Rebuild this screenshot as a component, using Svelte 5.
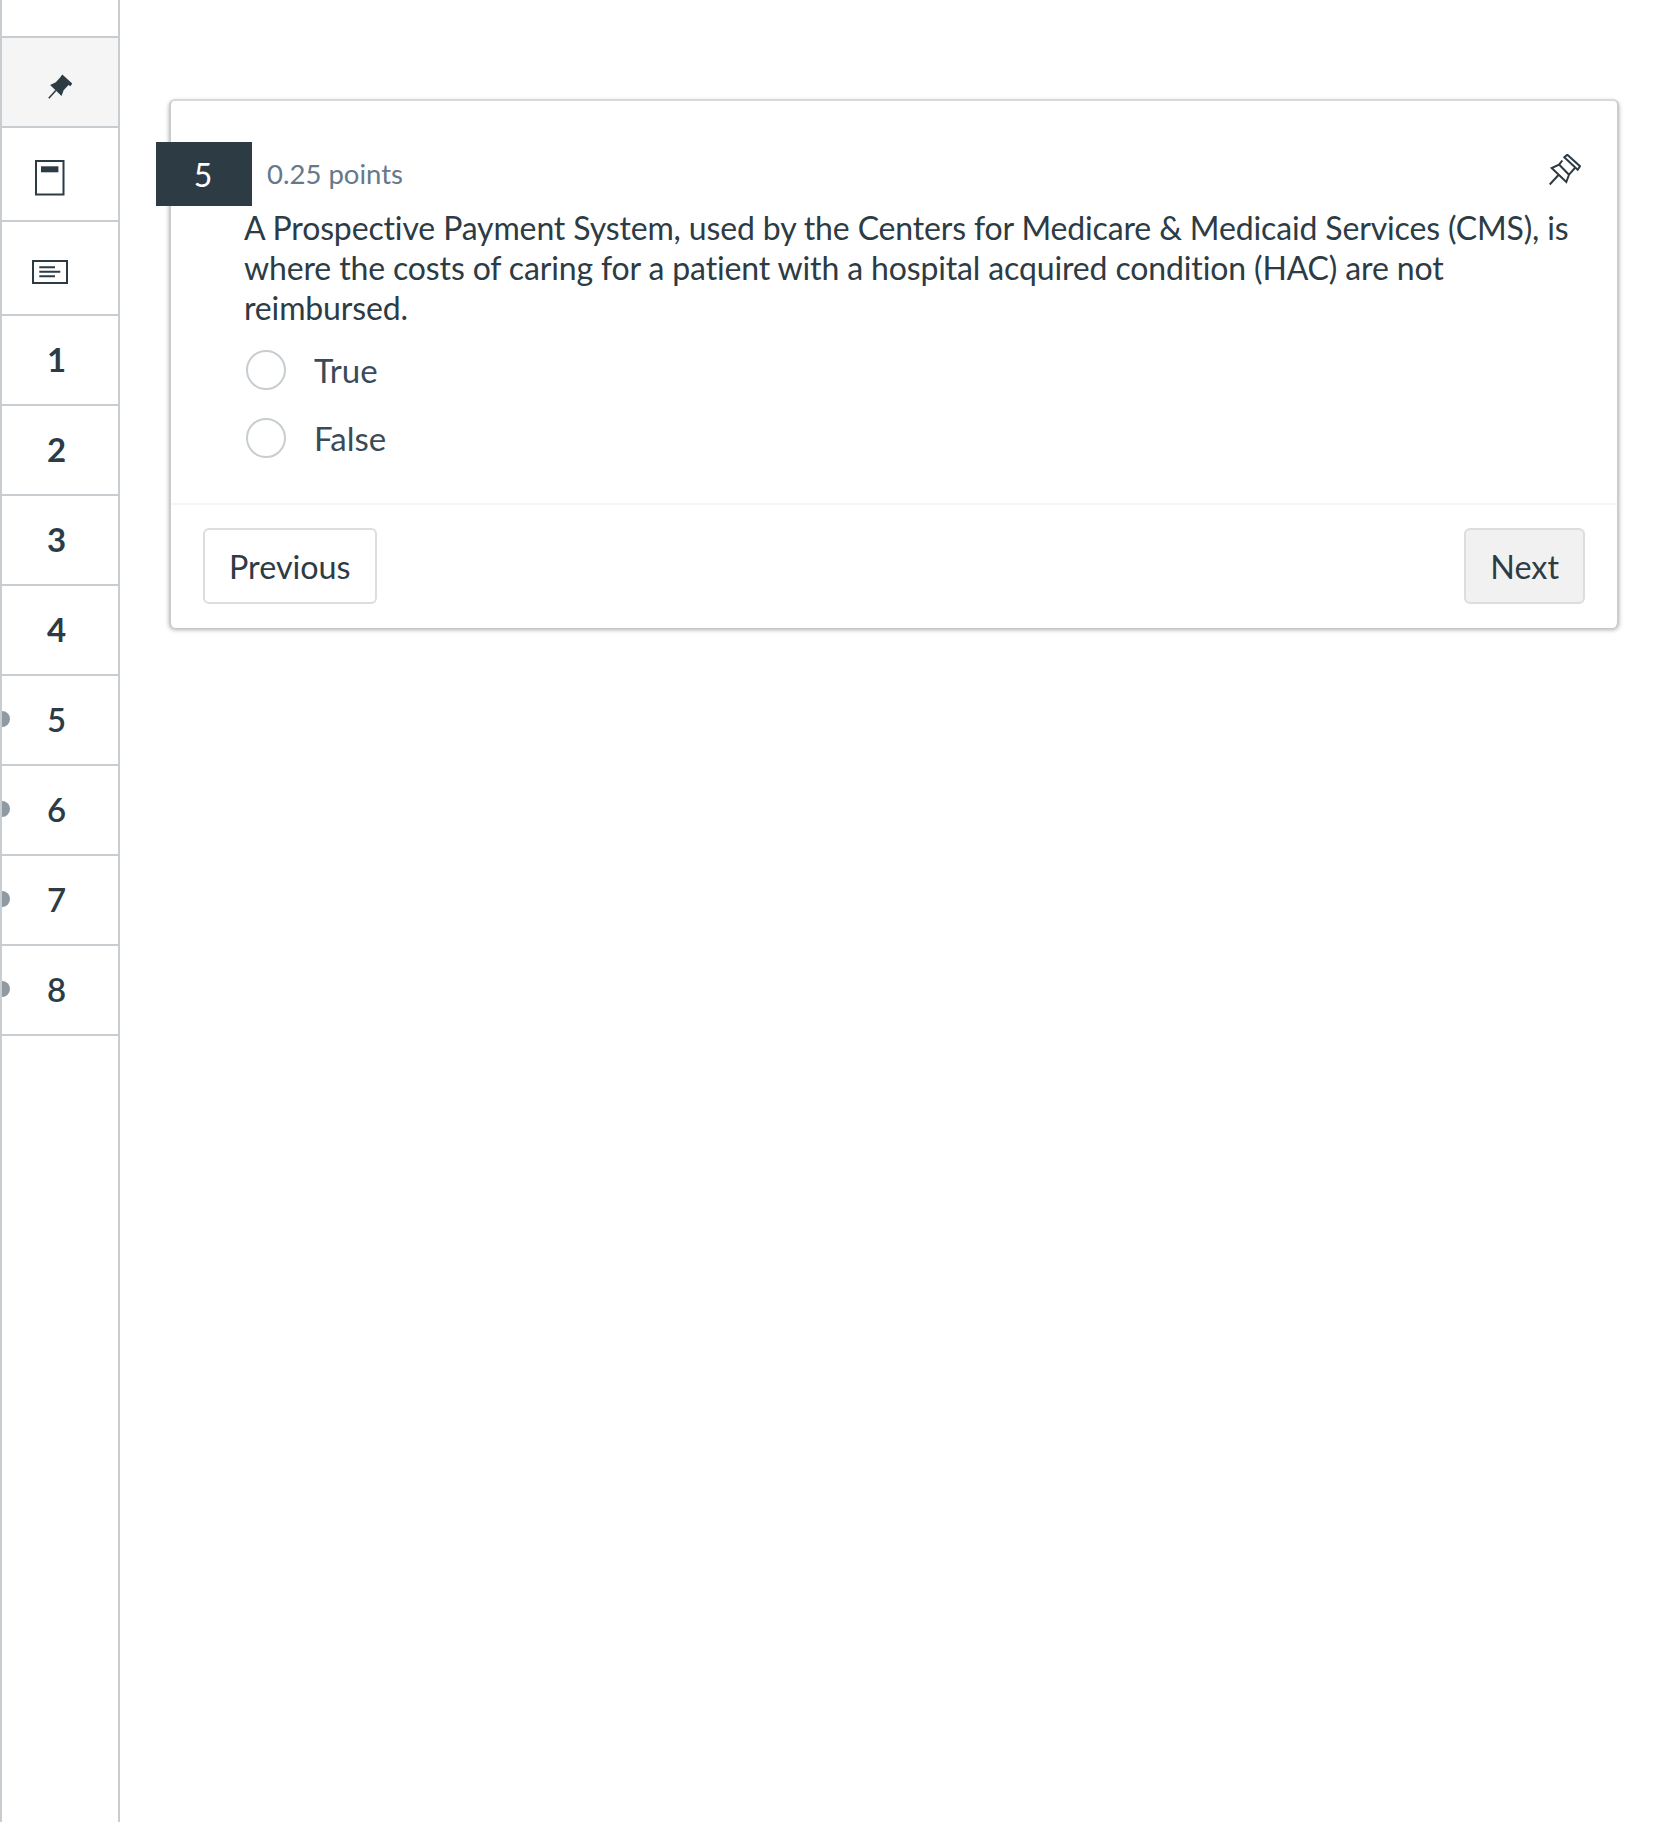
<script lang="ts">
	const numbers = [
		{ n: 1, flagged: false, done: true },
		{ n: 2, flagged: false, done: true },
		{ n: 3, flagged: false, done: true },
		{ n: 4, flagged: false, done: true },
		{ n: 5, flagged: true, done: false },
		{ n: 6, flagged: true, done: false },
		{ n: 7, flagged: true, done: false },
		{ n: 8, flagged: true, done: false }
	];
	const options = ['True', 'False'];
</script>

<div class="page">
	<nav class="rail">
		<div class="cell top"></div>
		<div class="cell pin">
			<svg width="25" height="25" viewBox="0 0 32 32" aria-hidden="true">
				<path class="solid" d="M18.3 .7 31 12.3 28.7 15.7 26.3 14 20 20.7 17.3 28 2.7 14 10 10.7 15.5 4.5z" />
				<path class="needle" d="M1 31 10 21" />
			</svg>
		</div>
		<div class="cell tool book">
			<svg width="30" height="36" viewBox="0 0 30 36" aria-hidden="true">
				<rect class="frame" x="1" y="1" width="27.5" height="33.5" />
				<rect class="solid" x="6" y="6.3" width="17.4" height="6" />
			</svg>
		</div>
		<div class="cell tool note">
			<svg width="36" height="24" viewBox="0 0 36 24" aria-hidden="true">
				<rect class="frame" x="1" y="1" width="34" height="22" />
				<path class="lines" d="M7.300 7.300H23M7.300 11.700H28.300M7.300 16.300H23" />
			</svg>
		</div>
		{#each numbers as q (q.n)}
			<div class="cell num" class:done={q.done}>
				{#if q.flagged}<span class="dot"></span>{/if}
				{q.n}
			</div>
		{/each}
	</nav>

	<main class="main">
		<section class="card">
			<div class="badge">5</div>
			<div class="head">
				<span class="points">0.25 points</span>
				<svg class="flag" width="32" height="32" viewBox="0 0 32 32" aria-hidden="true">
					<path d="M18.300 .7 31 12.300 28.700 15.700 15.300 3.300zM13.300 6.500 10 10.700 2.700 14 17.300 28 20 20.700 26.300 13.500M10.300 10.700 20 20.700M.7 30.500 9.500 21" />
				</svg>
			</div>
			<div class="body">
				<p class="text">A Prospective Payment System, used by the Centers for Medicare &amp; Medicaid Services (CMS), is where the costs of caring for a patient with a hospital acquired condition (HAC) are not reimbursed.</p>
				<div class="options">
					{#each options as o}
						<label class="option"><span class="radio"></span>{o}</label>
					{/each}
				</div>
			</div>
			<div class="foot">
				<button class="btn">Previous</button>
				<button class="btn next">Next</button>
			</div>
		</section>
	</main>
</div>

<style>
	:global(body) {
		background: #fff;
	}
	.page {
		display: flex;
		min-height: 1822px;
		font-family: Lato, "Open Sans", sans-serif;
		font-variant-ligatures: none;
		color: #2d3b45;
	}
	.rail {
		flex: 0 0 120px;
		box-sizing: border-box;
		border-left: 2px solid #c7cdd1;
		border-right: 2px solid #c7cdd1;
	}
	.cell {
		position: relative;
		overflow: hidden;
		box-sizing: border-box;
		height: 90px;
		display: flex;
		align-items: center;
		border-bottom: 2px solid #c7cdd1;
	}
	.top {
		height: 38px;
	}
	.pin {
		justify-content: center;
		background: #f5f5f5;
		padding-top: 9px;
	}
	.tool {
		height: 94px;
	}
	.book {
		padding: 8px 0 0 33px;
	}
	.note {
		padding: 8px 0 0 30px;
	}
	.num {
		padding-left: 45px;
		font-size: 33px;
		padding-bottom: 2px;
		font-weight: 600;
	}
	.num.done {
		font-weight: 700;
	}
	.dot {
		position: absolute;
		left: -8px;
		top: 35px;
		width: 16px;
		height: 16px;
		border-radius: 50%;
		background: #8f9aa3;
	}
	.solid {
		fill: #2d3b45;
	}
	.needle,
	.lines {
		fill: none;
		stroke: #2d3b45;
		stroke-width: 2;
	}
	.frame {
		fill: #fff;
		stroke: #2d3b45;
		stroke-width: 2;
	}
	.main {
		flex: 1;
		min-width: 0;
		padding: 99px 0 0 49px;
	}
	.card {
		position: relative;
		box-sizing: border-box;
		width: 1450px;
		height: 529px;
		background: #fff;
		border-radius: 6px;
		border: 2px solid #c7cdd1;
		border-top-color: #d5d9dc;
		border-width: 2px 2px 0;
		box-shadow: 0 2px 4px rgba(0, 0, 0, 0.3);
		display: flex;
		flex-direction: column;
	}
	.badge {
		position: absolute;
		left: -15px;
		top: 41px;
		box-sizing: border-box;
		width: 96px;
		height: 64px;
		padding-right: 2px;
		background: #2d3b45;
		color: #fff;
		font-size: 32px;
		display: flex;
		align-items: center;
		justify-content: center;
	}
	.head {
		display: flex;
		align-items: flex-start;
		justify-content: space-between;
		height: 107px;
		box-sizing: border-box;
		padding: 51px 36px 0 96px;
	}
	.points {
		font-size: 27.500px;
		line-height: 44px;
		color: #66788a;
	}
	.flag {
		fill: none;
		stroke: #2d3b45;
		stroke-width: 2;
		margin-top: 2px;
	}
	.body {
		padding: 0 40px 0 73px;
		flex: 1;
	}
	.text {
		margin: 0;
		font-size: 32px;
		letter-spacing: -0.14px;
		line-height: 40px;
	}
	.options {
		margin-top: 22px;
		display: flex;
		flex-direction: column;
		gap: 28px;
	}
	.option {
		display: flex;
		align-items: center;
		height: 40px;
		font-size: 33px;
		color: #394b58;
		padding-left: 2px;
	}
	.radio {
		box-sizing: border-box;
		width: 40px;
		height: 40px;
		border-radius: 50%;
		border: 2px solid #c7cdd1;
		margin-right: 28px;
	}
	.foot {
		border-top: 2px solid #f5f5f5;
		height: 125px;
		box-sizing: border-box;
		padding: 23px 32px 0;
		display: flex;
		justify-content: space-between;
		align-items: flex-start;
	}
	.btn {
		box-sizing: border-box;
		height: 76px;
		padding: 0 24px;
		background: #fff;
		border: 2px solid #ddd;
		border-radius: 6px;
		font: inherit;
		font-size: 32.300px;
		color: #2d3b45;
	}
	.next {
		background: #f1f1f1;
	}
</style>
